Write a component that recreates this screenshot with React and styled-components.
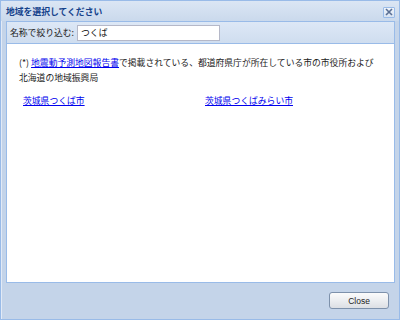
import React from 'react';
import styled, { createGlobalStyle } from 'styled-components';

const GlobalStyle = createGlobalStyle`
  html, body {
    margin: 0;
    padding: 0;
    background: #fff;
  }
  body {
    font-family: "Noto Sans CJK JP", "Liberation Sans", sans-serif;
  }
`;

const Window = styled.div`
  width: 400px;
  height: 320px;
  box-sizing: border-box;
  display: flex;
  flex-direction: column;
  background: #c4d4e9;
  border: 1px solid #99bbe8;
  box-shadow: inset 1px 1px 0 #e2eaf6;
`;

const Header = styled.div`
  height: 20px;
  display: flex;
  align-items: center;
  justify-content: space-between;
  padding: 0 4px 0 5px;
  background: linear-gradient(#dbe6f4, #cad9ec);
`;

const Title = styled.span`
  font-size: 8.8px;
  font-weight: bold;
  color: #15428b;
`;

const CloseTool = styled.button`
  width: 12px;
  height: 11px;
  padding: 0;
  margin-top: 2px;
  border: 1px solid #99bbe8;
  border-radius: 1px;
  background: linear-gradient(#f0f5fb, #d6e2f2);
  display: flex;
  align-items: center;
  justify-content: center;
`;

const Panel = styled.div`
  flex: 1;
  display: flex;
  flex-direction: column;
  margin: 0 4px 0 5px;
  border: 1px solid #99bbe8;
`;

const Toolbar = styled.div`
  height: 21px;
  display: flex;
  align-items: center;
  gap: 3px;
  padding: 0 3px;
  background: linear-gradient(#dde8f6, #cfddef);
  border-bottom: 1px solid #99bbe8;
`;

const Label = styled.span`
  font-size: 8.8px;
  color: #222;
`;

const Field = styled.input`
  width: 143px;
  height: 16px;
  box-sizing: border-box;
  padding: 0 3px;
  border: 1px solid #b5b8c8;
  background: #fff;
  font-family: inherit;
  font-size: 8.8px;
  color: #111;
  outline: none;
`;

const Body = styled.div`
  flex: 1;
  background: #fff;
  padding: 11px 12px;
`;

const Note = styled.p`
  margin: 0;
  font-size: 8.8px;
  line-height: 15px;
  color: #222;
`;

const Link = styled.a`
  color: #0000ee;
  text-decoration: underline;
  cursor: pointer;
`;

const LinkGrid = styled.div`
  display: grid;
  grid-template-columns: 182px 182px;
  margin: 8px 0 0 4px;
  font-size: 8.8px;
  line-height: 15px;
`;

const Footer = styled.div`
  height: 35px;
  display: flex;
  align-items: center;
  justify-content: flex-end;
  padding: 0 10px 1px 0;
`;

const Button = styled.button`
  width: 60px;
  height: 17px;
  padding: 0;
  border: 1px solid #7d91ab;
  border-radius: 3px;
  background: linear-gradient(#fbfbfb 0%, #eceef1 50%, #dcdfe4 100%);
  font-family: "Liberation Sans", sans-serif;
  font-size: 8.5px;
  color: #222;
`;

const cities = ['茨城県つくば市', '茨城県つくばみらい市'];

const App = () => (
  <>
    <GlobalStyle />
    <Window>
      <Header>
        <Title>地域を選択してください</Title>
        <CloseTool aria-label="close">
          <svg width="8" height="8" viewBox="0 0 8 8">
            <path d="M1 1L7 7M7 1L1 7" stroke="#5a6f94" strokeWidth="1.6" />
          </svg>
        </CloseTool>
      </Header>
      <Panel>
        <Toolbar>
          <Label>名称で絞り込む:</Label>
          <Field defaultValue="つくば" />
        </Toolbar>
        <Body>
          <Note>
            (*) <Link>地震動予測地図報告書</Link>で掲載されている、都道府県庁が所在している市の市役所および
            <br />
            北海道の地域振興局
          </Note>
          <LinkGrid>
            {cities.map((c) => (
              <Link key={c}>{c}</Link>
            ))}
          </LinkGrid>
        </Body>
      </Panel>
      <Footer>
        <Button>Close</Button>
      </Footer>
    </Window>
  </>
);

export default App;
